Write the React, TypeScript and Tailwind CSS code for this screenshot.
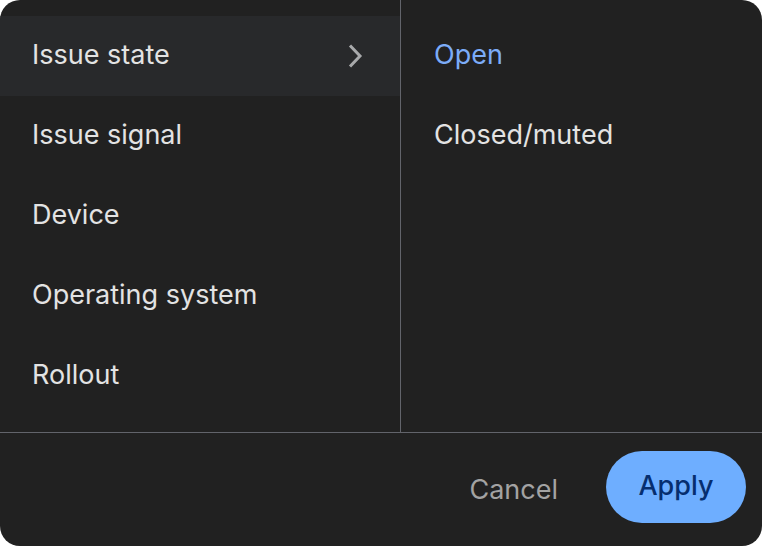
import React, { useState } from 'react';

const FILTERS = ['Issue state', 'Issue signal', 'Device', 'Operating system', 'Rollout'];
const OPTIONS: Record<string, string[]> = {
  'Issue state': ['Open', 'Closed/muted'],
};

const Chevron = () => (
  <svg width="16" height="24" viewBox="0 0 16 24" fill="none" className="text-[#a8a9ab]">
    <path d="M3 1.5l10 10.5L3 22.5" stroke="currentColor" strokeWidth="3" />
  </svg>
);

export default function App() {
  const [active, setActive] = useState('Issue state');
  const [selected, setSelected] = useState('Open');
  const options = OPTIONS[active] ?? [];

  return (
    <div className="bg-white w-[762px] h-[546px] font-['Inter','Roboto',sans-serif]">
      <div className="w-full h-full bg-[#212121] rounded-[20px] overflow-hidden flex flex-col">
        {/* Filter panes */}
        <div className="flex h-[433px] border-b border-[#62646b]">
          <div className="w-[401px] shrink-0 border-r border-[#62646b] py-4">
            {FILTERS.map((f) => (
              <button
                key={f}
                onClick={() => setActive(f)}
                className={`w-full h-20 flex items-center justify-between pl-[32px] pr-[37px] pb-[1px] text-[27px] text-[#e3e3e3] text-left ${
                  active === f ? 'bg-[#28292b]' : ''
                }`}
              >
                <span>{f}</span>
                {active === f && <Chevron />}
              </button>
            ))}
          </div>
          <div className="flex-1 py-4">
            {options.map((o) => (
              <button
                key={o}
                onClick={() => setSelected(o)}
                className={`w-full h-20 flex items-center pl-[33px] pb-[1px] text-[27px] text-left ${
                  selected === o ? 'text-[#7cacf8]' : 'text-[#e3e3e3]'
                }`}
              >
                {o}
              </button>
            ))}
          </div>
        </div>

        {/* Footer */}
        <div className="flex-1 flex items-center justify-end gap-12 pr-4 pb-[6px]">
          <button className="text-[27px] text-[#a3a3a3] mt-2">Cancel</button>
          <button className="h-[72px] w-[140px] rounded-full bg-[#6eaeff] text-[27px] font-medium text-[#062e6f]">
            Apply
          </button>
        </div>
      </div>
    </div>
  );
}
